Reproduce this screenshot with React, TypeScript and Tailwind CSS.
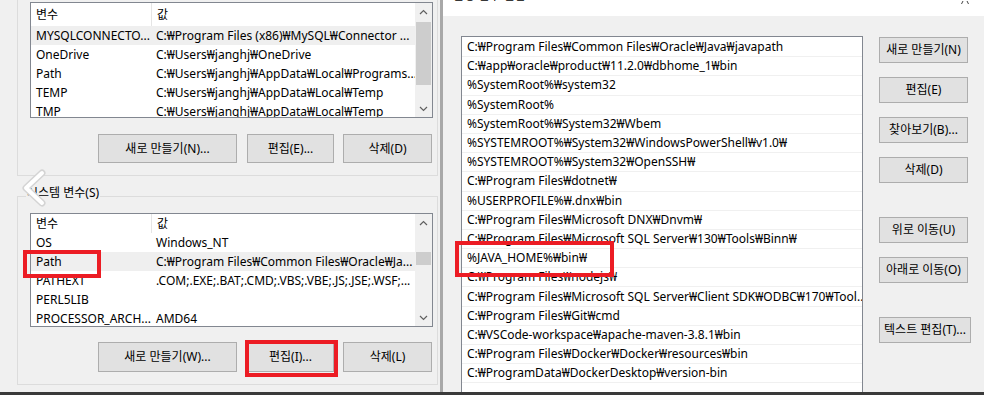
import React from 'react';

const W = '₩';
const FONT = "font-['Noto_Sans','Noto_Sans_CJK_KR',sans-serif]";

type Row = { name: string; value: string; selected?: boolean };

const userRows: Row[] = [
    { name: 'MYSQLCONNECTO...', value: `C:${W}Program Files (x86)${W}MySQL${W}Connector ...`, selected: true },
    { name: 'OneDrive', value: `C:${W}Users${W}janghj${W}OneDrive` },
    { name: 'Path', value: `C:${W}Users${W}janghj${W}AppData${W}Local${W}Programs...` },
    { name: 'TEMP', value: `C:${W}Users${W}janghj${W}AppData${W}Local${W}Temp` },
    { name: 'TMP', value: `C:${W}Users${W}janghj${W}AppData${W}Local${W}Temp` },
];

const systemRows: Row[] = [
    { name: 'OS', value: 'Windows_NT' },
    { name: 'Path', value: `C:${W}Program Files${W}Common Files${W}Oracle${W}Ja...`, selected: true },
    { name: 'PATHEXT', value: '.COM;.EXE;.BAT;.CMD;.VBS;.VBE;.JS;.JSE;.WSF;...' },
    { name: 'PERL5LIB', value: '' },
    { name: 'PROCESSOR_ARCH...', value: 'AMD64' },
];

const pathEntries = [
    `C:${W}Program Files${W}Common Files${W}Oracle${W}Java${W}javapath`,
    `C:${W}app${W}oracle${W}product${W}11.2.0${W}dbhome_1${W}bin`,
    `%SystemRoot%${W}system32`,
    `%SystemRoot%`,
    `%SystemRoot%${W}System32${W}Wbem`,
    `%SYSTEMROOT%${W}System32${W}WindowsPowerShell${W}v1.0${W}`,
    `%SYSTEMROOT%${W}System32${W}OpenSSH${W}`,
    `C:${W}Program Files${W}dotnet${W}`,
    `%USERPROFILE%${W}.dnx${W}bin`,
    `C:${W}Program Files${W}Microsoft DNX${W}Dnvm${W}`,
    `C:${W}Program Files${W}Microsoft SQL Server${W}130${W}Tools${W}Binn${W}`,
    `%JAVA_HOME%${W}bin${W}`,
    `C:${W}Program Files${W}nodejs${W}`,
    `C:${W}Program Files${W}Microsoft SQL Server${W}Client SDK${W}ODBC${W}170${W}Tool...`,
    `C:${W}Program Files${W}Git${W}cmd`,
    `C:${W}VSCode-workspace${W}apache-maven-3.8.1${W}bin`,
    `C:${W}Program Files${W}Docker${W}Docker${W}resources${W}bin`,
    `C:${W}ProgramData${W}DockerDesktop${W}version-bin`,
];

function Chevron({ up }: { up?: boolean }) {
    return (
        <svg width="9" height="6" viewBox="0 0 9 6">
            <polyline
                points={up ? '1,5 4.5,1.5 8,5' : '1,1 4.5,4.5 8,1'}
                fill="none"
                stroke="#606060"
                strokeWidth="1.2"
            />
        </svg>
    );
}

function ListBox({ rows, tall, thumbTop, thumbHeight }: { rows: Row[]; tall?: boolean; thumbTop: number; thumbHeight: number }) {
    return (
        <div className={`flex w-[403px] border border-[#828790] bg-white ${tall ? 'h-[116px]' : 'h-[114px]'}`}>
            <div className="flex-1 overflow-hidden">
                <div className={`flex items-center ${tall ? 'h-[23px]' : 'h-[19px]'}`}>
                    <div className="w-[120px] shrink-0 pl-[5px]">변수</div>
                    <div className="h-full border-l border-[#e5e5e5] pl-[5px] flex items-center">값</div>
                </div>
                {rows.map((r) => (
                    <div key={r.name} className={`flex h-[19px] items-center whitespace-nowrap ${r.selected ? 'bg-[#efefef]' : ''}`}>
                        <div className="w-[120px] shrink-0 pl-[5px] overflow-hidden">{r.name}</div>
                        <div className="pl-[5px]">{r.value}</div>
                    </div>
                ))}
            </div>
            <div className="relative flex h-full w-[17px] shrink-0 flex-col items-center justify-between bg-[#f0f0f0]">
                <div className="flex h-[17px] items-center"><Chevron up /></div>
                <div className="absolute left-[1px] w-[15px] bg-[#cdcdcd]" style={{ top: thumbTop, height: thumbHeight }} />
                <div className="flex h-[17px] items-center"><Chevron /></div>
            </div>
        </div>
    );
}

function Btn({ label, w, className = '' }: { label: string; w: string; className?: string }) {
    return (
        <div className={`flex items-center justify-center border border-[#adadad] bg-[#e1e1e1] ${w} ${className}`}>
            {label}
        </div>
    );
}

function RedBox({ className }: { className: string }) {
    return <div className={`absolute border-[4px] border-[#ec1c24] ${className}`} />;
}

export default function App() {
    return (
        <div className={`${FONT} text-[12px] text-black w-[984px] h-[395px] overflow-hidden flex flex-col bg-[#f0f0f0]`}>
            <div className="flex h-[392px]">
                {/* left: 환경 변수 */}
                <div className="relative w-[440px] h-full bg-[#f0f0f0] pl-[17px]">
                    <div className="w-[421px] h-[176px] border-x border-b border-[#dcdcdc] pl-[12px] pt-[2px]">
                        <ListBox rows={userRows} tall thumbTop={19} thumbHeight={63} />
                        <div className="mt-[16px] flex h-[29px]">
                            <Btn label="새로 만들기(N)..." w="w-[139px]" className="ml-[68px]" />
                            <Btn label="편집(E)..." w="w-[87px]" className="ml-[10px]" />
                            <Btn label="삭제(D)" w="w-[89px]" className="ml-[9px]" />
                        </div>
                    </div>
                    <div className="relative mt-[20px] w-[421px] h-[189px] border border-[#dcdcdc] pl-[12px] pt-[16px]">
                        <div className="absolute left-[8px] top-[-13px] bg-[#f0f0f0] px-[1px]">시스템 변수(S)</div>
                        <ListBox rows={systemRows} thumbTop={38} thumbHeight={13} />
                        <div className="mt-[15px] flex h-[30px]">
                            <Btn label="새로 만들기(W)..." w="w-[139px]" className="ml-[68px]" />
                            <Btn label="편집(I)..." w="w-[87px]" className="ml-[10px]" />
                            <Btn label="삭제(L)" w="w-[89px]" className="ml-[9px]" />
                        </div>
                    </div>
                    <RedBox className="left-[23px] top-[250px] w-[78px] h-[28px]" />
                    <RedBox className="left-[245px] top-[340px] w-[93px] h-[37px]" />
                    <svg className="absolute left-[20px] top-[169px]" width="28" height="38" viewBox="0 0 28 38">
                        <polyline points="22,4 6,19 22,34" fill="none" stroke="#d4d4d4" strokeWidth="7" strokeLinecap="round" strokeLinejoin="round" />
                        <polyline points="22,4 6,19 22,34" fill="none" stroke="#ffffff" strokeWidth="4" strokeLinecap="round" strokeLinejoin="round" />
                    </svg>
                </div>

                <div className="w-[3px] h-full bg-[#a8a8a8]" />

                {/* right: 환경 변수 편집 */}
                <div className="relative w-[541px] h-full bg-[#f0f0f0]">
                    <div className="relative h-[16px] overflow-hidden bg-white">
                        <div className="absolute left-[10px] top-[-12px] text-[12px] leading-[16px]">환경 변수 편집</div>
                        <svg className="absolute left-[518px] top-[1px]" width="8" height="5" viewBox="0 0 8 5">
                            <line x1="2" y1="0" x2="0.5" y2="3" stroke="#444" strokeWidth="1" />
                            <line x1="6" y1="0" x2="7.5" y2="3" stroke="#444" strokeWidth="1" />
                        </svg>
                    </div>
                    <div className="flex pl-[18px] pt-[20px]">
                        <div className="relative h-[356px] w-[402px] overflow-hidden border border-b-0 border-[#828790] bg-white pt-[1px]">
                            {pathEntries.map((p) => (
                                <div key={p} className="flex h-[19.2px] items-center whitespace-nowrap border-b border-[#f0f0f0] pl-[5px]">
                                    {p}
                                </div>
                            ))}
                        </div>
                        <div className="ml-[16px] mt-[1px] flex flex-col">
                            <Btn label="새로 만들기(N)" w="w-[89px]" className="h-[26px]" />
                            <Btn label="편집(E)" w="w-[89px]" className="h-[26px] mt-[14px]" />
                            <Btn label="찾아보기(B)..." w="w-[89px]" className="h-[26px] mt-[14px]" />
                            <Btn label="삭제(D)" w="w-[89px]" className="h-[26px] mt-[14px]" />
                            <Btn label="위로 이동(U)" w="w-[89px]" className="h-[26px] mt-[34px]" />
                            <Btn label="아래로 이동(O)" w="w-[89px]" className="h-[26px] mt-[14px]" />
                            <Btn label="텍스트 편집(T)..." w="w-[92px]" className="h-[26px] mt-[34px]" />
                        </div>
                    </div>
                    <RedBox className="left-[12px] top-[241px] w-[159px] h-[36px]" />
                </div>
            </div>
            <div className="h-[3px] bg-[#3a3a3a]" />
        </div>
    );
}
